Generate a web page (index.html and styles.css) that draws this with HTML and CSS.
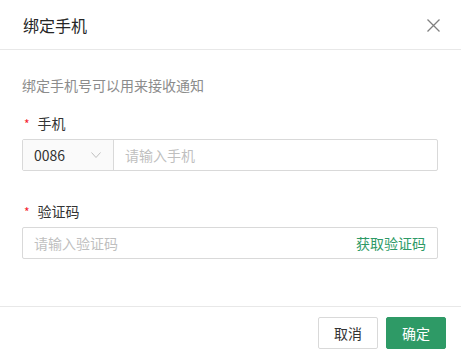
FILE: index.html
```html
<!DOCTYPE html>
<html lang="zh-CN">
<head>
  <meta charset="UTF-8">
  <meta name="viewport" content="width=device-width, initial-scale=1.0">
  <title>绑定手机</title>
  <link rel="stylesheet" href="styles.css">
</head>
<body>
  <div class="modal">
    <div class="modal-header">
      <span class="modal-title">绑定手机</span>
      <svg class="close" width="13" height="13" viewBox="0 0 13 13">
        <path d="M0.5 0.5 L12.5 12.5 M12.5 0.5 L0.5 12.5" stroke="#808080" stroke-width="1.3" fill="none"/>
      </svg>
    </div>

    <div class="modal-body">
      <p class="desc">绑定手机号可以用来接收通知</p>

      <div class="field">
        <label class="label"><span class="star">*</span>手机</label>
        <div class="input-group">
          <div class="select">
            <span>0086</span>
            <svg width="10" height="6" viewBox="0 0 10 6">
              <path d="M0.5 0.5 L5 5.5 L9.5 0.5" stroke="#bfbfbf" stroke-width="1" fill="none"/>
            </svg>
          </div>
          <input class="input" placeholder="请输入手机">
        </div>
      </div>

      <div class="field">
        <label class="label"><span class="star">*</span>验证码</label>
        <div class="input-group">
          <input class="input" placeholder="请输入验证码">
          <span class="get-code">获取验证码</span>
        </div>
      </div>
    </div>

    <div class="modal-footer">
      <button class="btn">取消</button>
      <button class="btn btn-primary">确定</button>
    </div>
  </div>
</body>
</html>
```

FILE: styles.css
```css
body {
  margin: 0;
  padding: 0;
  background: #fff;
  font-family: "Noto Sans CJK SC", "Noto Sans", sans-serif;
  color: #333;
}

.modal {
  width: 461px;
  height: 359px;
  display: flex;
  flex-direction: column;
}

.modal-header {
  height: 49px;
  border-bottom: 1px solid #e8e8e8;
  display: flex;
  align-items: center;
  justify-content: space-between;
  padding: 0 21px 0 23px;
}

.modal-title {
  font-size: 16px;
  color: #262626;
}

.close {
  margin-top: 1px;
}

.modal-body {
  flex: 1;
  padding: 24px 23px 0 22px;
}

.desc {
  margin: 0 0 15px;
  font-size: 14px;
  line-height: 22px;
  color: #8c8c8c;
}

.field {
  margin-bottom: 28px;
}

.label {
  display: flex;
  align-items: center;
  font-size: 14px;
  line-height: 22px;
  color: #333;
  margin-bottom: 4px;
}

.star {
  color: #f5222d;
  font-size: 12px;
  margin: 2px 8px 0 2px;
}

.input-group {
  display: flex;
  align-items: center;
  height: 30px;
  border: 1px solid #d9d9d9;
  border-radius: 2px;
}

.select {
  width: 91px;
  height: 100%;
  display: flex;
  align-items: center;
  justify-content: space-between;
  padding: 0 12px 0 11px;
  border-right: 1px solid #d9d9d9;
  background: #fafafa;
  font-size: 14px;
  color: #333;
  box-sizing: border-box;
}

.input {
  flex: 1;
  height: 100%;
  border: none;
  outline: none;
  padding: 0 11px;
  font-family: inherit;
  font-size: 14px;
  background: transparent;
}

.input::placeholder {
  color: #bfbfbf;
}

.get-code {
  font-size: 14px;
  color: #2e9a66;
  padding-right: 11px;
}

.modal-footer {
  height: 51px;
  border-top: 1px solid #e8e8e8;
  display: flex;
  align-items: center;
  justify-content: flex-end;
  gap: 8px;
  padding: 0 15px 1px 0;
}

.btn {
  height: 32px;
  padding: 0 15px;
  font-family: inherit;
  font-size: 14px;
  color: #333;
  background: #fff;
  border: 1px solid #d9d9d9;
  border-radius: 2px;
}

.btn-primary {
  color: #fff;
  background: #2e9a66;
  border-color: #2e9a66;
}
```
